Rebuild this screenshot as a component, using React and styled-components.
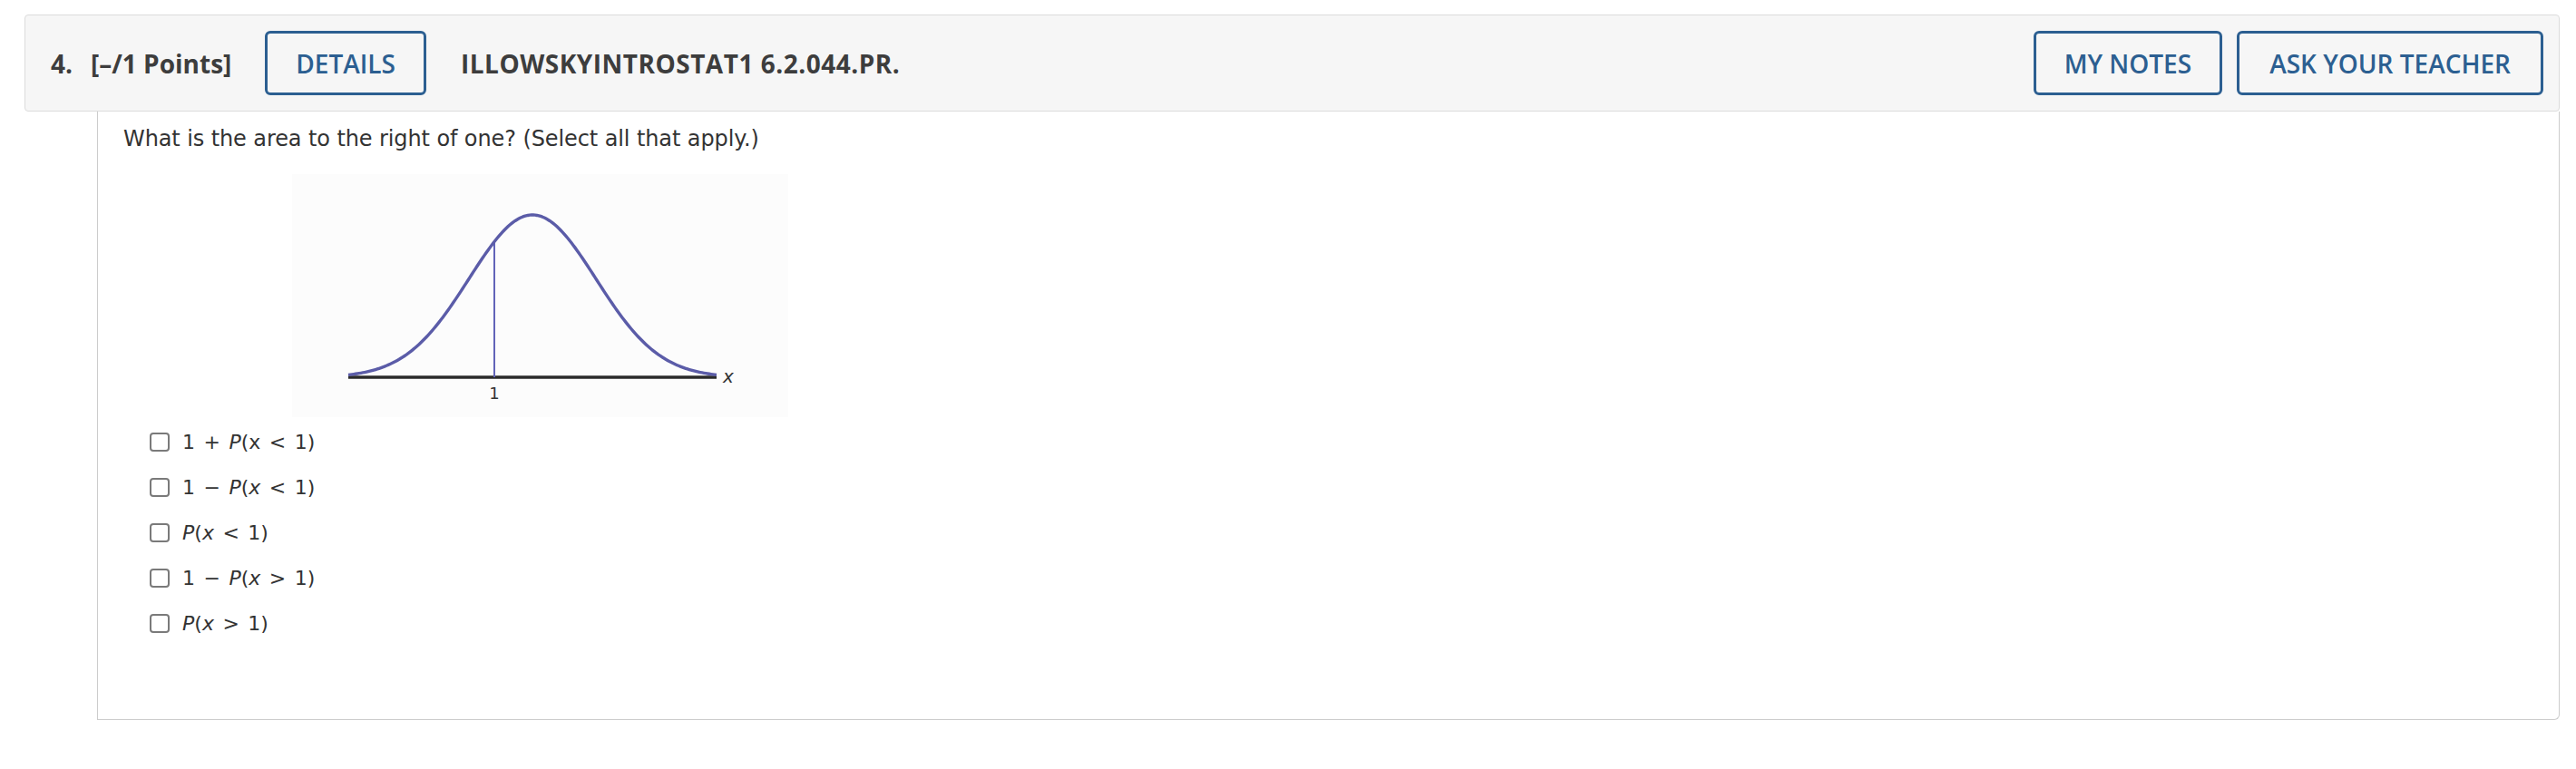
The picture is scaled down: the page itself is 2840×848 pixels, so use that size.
import React from "react";
import styled, { createGlobalStyle } from "styled-components";

const GlobalStyle = createGlobalStyle`
  html, body { margin: 0; padding: 0; background: #ffffff; }
  * { box-sizing: border-box; }
`;

const Page = styled.div`
  padding: 16px 18px 0 27px;
`;

const Header = styled.div`
  display: flex;
  align-items: center;
  height: 107px;
  padding: 0 17px 0 28px;
  background: #f6f6f6;
  border: 1px solid #dcdcdc;
  border-radius: 4px;
  font-family: "Open Sans", "Liberation Sans", sans-serif;
  font-size: 28px;
  font-weight: 700;
  color: #3d3d3d;
`;

const Num = styled.span`
  margin-right: 20px;
`;

const Points = styled.span`
  margin-right: 37px;
`;

const Title = styled.span`
  margin-left: 38px;
  flex: 1;
  letter-spacing: 0.5px;
`;

const Button = styled.button`
  height: 71px;
  padding: 0 ${(p) => p.$pad || 30}px;
  margin-left: ${(p) => p.$gap || 0}px;
  background: transparent;
  border: 3px solid #2c5f91;
  border-radius: 6px;
  font-family: "Open Sans", "Liberation Sans", sans-serif;
  font-size: 28px;
  font-weight: 600;
  color: #2c5f91;
  cursor: pointer;
`;

const Answer = styled.div`
  margin-left: 80px;
  height: 671px;
  padding: 12px 0 0 28px;
  border: 1px solid #cccccc;
  border-top: none;
  border-bottom-right-radius: 6px;
  font-family: "DejaVu Sans", Verdana, sans-serif;
  color: #333333;
`;

const Question = styled.div`
  font-size: 24px;
  line-height: 36px;
  letter-spacing: -0.1px;
`;

const Figure = styled.div`
  width: 547px;
  height: 268px;
  margin: 21px 0 0 186px;
  background: #fcfcfc;
`;

const Choices = styled.div`
  margin-top: 2px;
  padding-left: 29px;
  display: flex;
  flex-direction: column;
`;

const Choice = styled.label`
  display: flex;
  align-items: center;
  height: 50px;
  font-size: 22px;
  word-spacing: 2.5px;
`;

const Box = styled.span`
  width: 22px;
  height: 21px;
  border: 2px solid #7a7a7a;
  border-radius: 4px;
  background: #fff;
  margin-right: 14px;
  flex: none;
`;

const I = styled.i`
  font-style: italic;
`;

const W = 547;
const cx = 265;
const base = 224;
const amp = 179;
const sigma = 70;
const pts = [];
for (let x = 62; x <= 468; x += 2) {
  const y = base - amp * Math.exp(-((x - cx) ** 2) / (2 * sigma * sigma));
  pts.push(`${x},${y.toFixed(2)}`);
}
const curve = "M" + pts.join(" L");
const lineX = 223;
const lineY = base - amp * Math.exp(-((lineX - cx) ** 2) / (2 * sigma * sigma));

function Graph() {
  return (
    <svg width={W} height="268" viewBox="0 0 547 268">
      <line x1="62" y1={base} x2="468" y2={base} stroke="#2a2a2a" strokeWidth="3.5" />
      <line x1={lineX} y1={lineY} x2={lineX} y2={base} stroke="#6264b8" strokeWidth="2" />
      <path d={curve} fill="none" stroke="#5b5ca8" strokeWidth="3.4" strokeLinejoin="round" />
      <text x="475" y="230" fontFamily="DejaVu Sans, sans-serif" fontStyle="italic" fontSize="20" fill="#333">x</text>
      <text x={lineX} y="248" textAnchor="middle" fontFamily="DejaVu Sans, sans-serif" fontSize="18" fill="#333">1</text>
    </svg>
  );
}

const choices = [
  <>1 + <I>P</I>(x &lt; 1)</>,
  <>1 − <I>P</I>(<I>x</I> &lt; 1)</>,
  <><I>P</I>(<I>x</I> &lt; 1)</>,
  <>1 − <I>P</I>(<I>x</I> &gt; 1)</>,
  <><I>P</I>(<I>x</I> &gt; 1)</>,
];

export default function App() {
  return (
    <>
      <GlobalStyle />
      <Page>
        <Header>
          <Num>4.</Num>
          <Points>[–/1 Points]</Points>
          <Button $pad={31}>DETAILS</Button>
          <Title>ILLOWSKYINTROSTAT1 6.2.044.PR.</Title>
          <Button $pad={31}>MY NOTES</Button>
          <Button $pad={33} $gap={16}>ASK YOUR TEACHER</Button>
        </Header>
        <Answer>
          <Question>What is the area to the right of one? (Select all that apply.)</Question>
          <Figure>
            <Graph />
          </Figure>
          <Choices>
            {choices.map((c, i) => (
              <Choice key={i}>
                <Box />
                <span>{c}</span>
              </Choice>
            ))}
          </Choices>
        </Answer>
      </Page>
    </>
  );
}
